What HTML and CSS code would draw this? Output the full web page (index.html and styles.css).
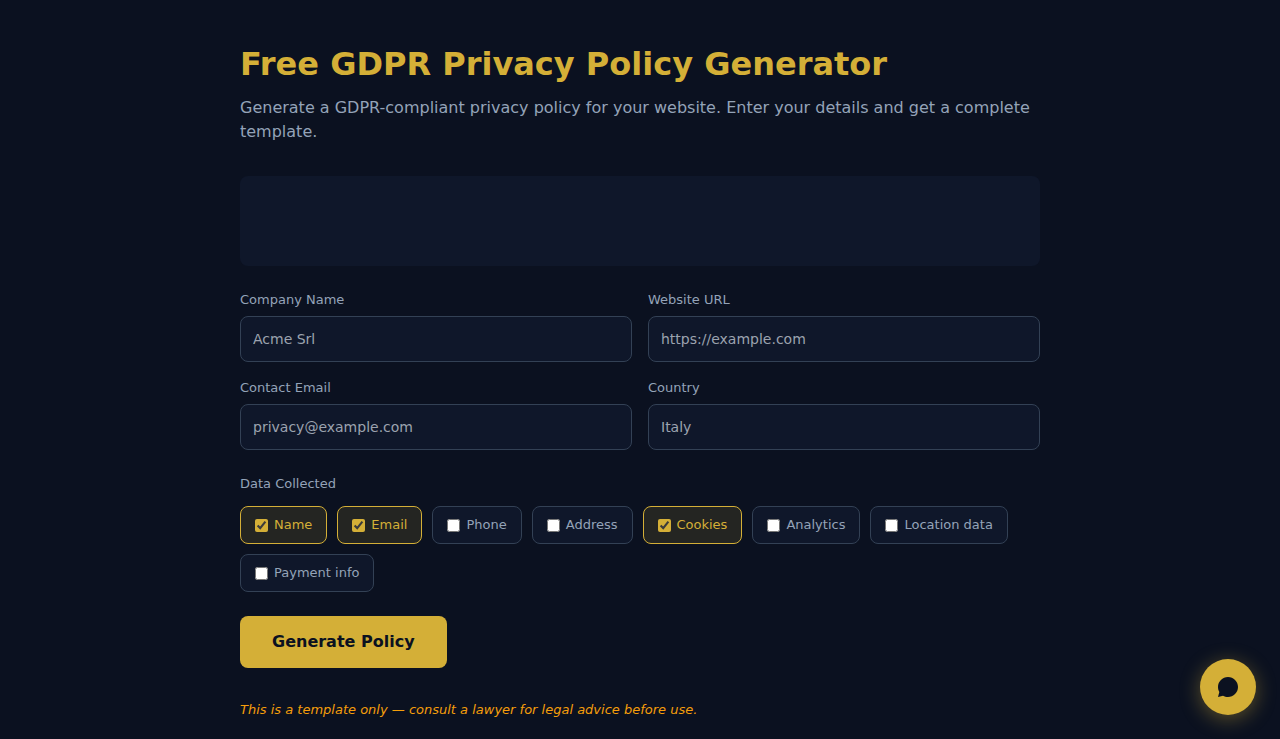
FILE: index.html
```html
<!DOCTYPE html>
<html lang="en">
<head>
    <meta charset="UTF-8">
    <meta name="viewport" content="width=device-width, initial-scale=1.0">
    <title>Free GDPR Privacy Policy Generator</title>
    <link rel="stylesheet" href="styles.css">
</head>
<body>
    <main class="container">
        <h1>Free GDPR Privacy Policy Generator</h1>
        <p class="subtitle">Generate a GDPR-compliant privacy policy for your website. Enter your details and get a complete template.</p>

        <div class="ad-slot"></div>

        <form id="policyForm">
            <div class="form-grid">
                <div class="field">
                    <label for="company">Company Name</label>
                    <input type="text" id="company" placeholder="Acme Srl">
                </div>
                <div class="field">
                    <label for="website">Website URL</label>
                    <input type="url" id="website" placeholder="https://example.com">
                </div>
                <div class="field">
                    <label for="email">Contact Email</label>
                    <input type="email" id="email" placeholder="privacy@example.com">
                </div>
                <div class="field">
                    <label for="country">Country</label>
                    <input type="text" id="country" placeholder="Italy">
                </div>
            </div>

            <fieldset class="data-types">
                <legend>Data Collected</legend>
                <div class="chips">
                    <label class="chip"><input type="checkbox" name="data" value="name" checked>Name</label>
                    <label class="chip"><input type="checkbox" name="data" value="email" checked>Email</label>
                    <label class="chip"><input type="checkbox" name="data" value="phone">Phone</label>
                    <label class="chip"><input type="checkbox" name="data" value="address">Address</label>
                    <label class="chip"><input type="checkbox" name="data" value="cookies" checked>Cookies</label>
                    <label class="chip"><input type="checkbox" name="data" value="analytics">Analytics</label>
                    <label class="chip"><input type="checkbox" name="data" value="location">Location data</label>
                    <label class="chip"><input type="checkbox" name="data" value="payment">Payment info</label>
                </div>
            </fieldset>

            <button type="button" class="generate-btn">Generate Policy</button>
        </form>

        <p class="disclaimer">This is a template only — consult a lawyer for legal advice before use.</p>
    </main>

    <!-- Chat -->
    <button type="button" class="chat-btn" aria-label="Open chat">
        <svg viewBox="0 0 24 24" width="24" height="24" fill="currentColor">
            <path d="M12 2C6.48 2 2 6.48 2 12c0 1.82.49 3.53 1.34 5L2 22l5-1.34C8.47 21.51 10.18 22 12 22c5.52 0 10-4.48 10-10S17.52 2 12 2z"/>
        </svg>
    </button>
</body>
</html>
```

FILE: styles.css
```css
* {
    margin: 0;
    padding: 0;
    box-sizing: border-box;
}

body {
    font-family: 'DejaVu Sans', sans-serif;
    background: #0b1120;
    color: #e2e8f0;
    min-height: 100vh;
    line-height: 24px;
}

.container {
    max-width: 848px;
    margin: 0 auto;
    padding: 40px 24px 16px;
}

h1 {
    color: #d4af37;
    font-size: 32px;
    line-height: 48px;
    margin-bottom: 8px;
}

.subtitle {
    color: #94a3b8;
    font-size: 16px;
    margin-bottom: 32px;
}

.ad-slot {
    min-height: 90px;
    margin-bottom: 24px;
    background: #0f172a;
    border-radius: 8px;
}

.form-grid {
    display: grid;
    grid-template-columns: 1fr 1fr;
    gap: 16px;
    margin-bottom: 24px;
}

.field label,
.data-types legend {
    display: block;
    color: #94a3b8;
    font-size: 13px;
    line-height: 20px;
}

.field label {
    margin-bottom: 6px;
}

.field input {
    display: block;
    width: 100%;
    height: 46px;
    padding: 12px;
    background: #0f172a;
    border: 1px solid #334155;
    border-radius: 8px;
    color: #e2e8f0;
    font-family: inherit;
    font-size: 14px;
}

.field input::placeholder {
    color: #9ca3af;
}

.field input:focus {
    outline: none;
    border-color: #d4af37;
}

.data-types {
    border: none;
    margin-bottom: 24px;
}

.data-types legend {
    margin-bottom: 12px;
}

.chips {
    display: flex;
    flex-wrap: wrap;
    gap: 10px;
}

.chip {
    display: flex;
    align-items: center;
    gap: 6px;
    padding: 8px 14px;
    background: #0f172a;
    border: 1px solid #334155;
    border-radius: 8px;
    color: #94a3b8;
    font-size: 13px;
    line-height: 20px;
    cursor: pointer;
}

.chip:has(input:checked) {
    background: rgba(212, 175, 55, 0.13);
    border-color: #d4af37;
    color: #d4af37;
}

.chip input {
    accent-color: #d4af37;
}

.generate-btn {
    padding: 14px 32px;
    background: #d4af37;
    border: none;
    border-radius: 8px;
    color: #0b1120;
    font-family: inherit;
    font-size: 16px;
    font-weight: bold;
    line-height: 24px;
    cursor: pointer;
}

.disclaimer {
    margin-top: 32px;
    color: #f59e0b;
    font-size: 13px;
    font-style: italic;
    line-height: 20px;
}

/* Chat button */
.chat-btn {
    position: fixed;
    right: 24px;
    bottom: 24px;
    display: flex;
    align-items: center;
    justify-content: center;
    width: 56px;
    height: 56px;
    background: #d4af37;
    border: none;
    border-radius: 50%;
    box-shadow: 0 4px 20px rgba(212, 175, 55, 0.4);
    color: #0b1120;
    cursor: pointer;
}
```
